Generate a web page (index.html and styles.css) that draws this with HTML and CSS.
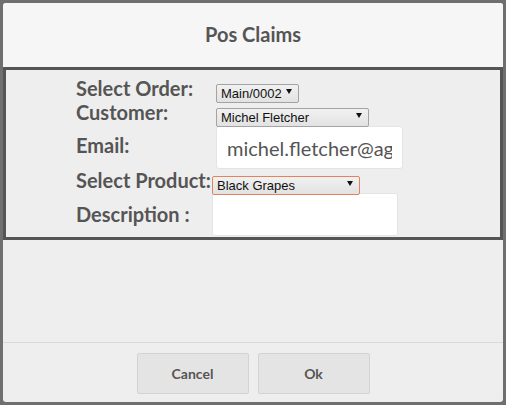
FILE: index.html
```html
<!DOCTYPE html>
<html lang="en">
<head>
    <meta charset="UTF-8">
    <meta name="viewport" content="width=device-width, initial-scale=1.0">
    <title>Pos Claims</title>
    <link rel="stylesheet" href="styles.css">
</head>
<body>
    <div class="modal">
        <div class="modal-header">Pos Claims</div>

        <div class="claim-box">
            <div class="row">
                <label class="lbl">Select Order:</label>
                <span class="select select-order">
                    <select>
                        <option>Main/0002</option>
                    </select>
                </span>
            </div>
            <div class="row">
                <label class="lbl">Customer:</label>
                <span class="select select-customer">
                    <select>
                        <option>Michel Fletcher</option>
                    </select>
                </span>
            </div>
            <div class="row row-email">
                <label class="lbl">Email:</label>
                <input class="text-input" type="text" value="michel.fletcher@agrolait.example.com">
            </div>
            <div class="row row-shift">
                <label class="lbl">Select Product:</label>
                <span class="select select-product focused">
                    <select>
                        <option>Black Grapes</option>
                    </select>
                </span>
            </div>
            <div class="row row-shift row-desc">
                <label class="lbl">Description :</label>
                <input class="text-input desc-input" type="text">
            </div>
        </div>

        <div class="spacer"></div>

        <div class="modal-footer">
            <button class="btn">Cancel</button>
            <button class="btn">Ok</button>
        </div>
    </div>
</body>
</html>
```

FILE: styles.css
```css
body {
    margin: 0;
    background-color: #6f6f6f;
    font-family: 'Lato', sans-serif;
    color: #555;
}
.modal {
    margin: 3px;
    width: 500px;
    height: 399px;
    background: #efeeee;
    border-radius: 3px;
    display: flex;
    flex-direction: column;
    overflow: hidden;
}
.modal-header {
    height: 64px;
    background: #f6f6f6;
    font-size: 20px;
    font-weight: bold;
    text-align: center;
    line-height: 62px;
}
.claim-box {
    height: 161px;
    border: 3px solid #555;
    padding: 6px 0 0 70px;
    overflow: hidden;
}
.row {
    display: flex;
    align-items: flex-start;
    height: 24px;
}
.lbl {
    width: 140px;
    flex-shrink: 0;
    font-size: 20px;
    font-weight: bold;
    line-height: 24px;
}
.row-shift .lbl {
    width: 136px;
}
.select {
    position: relative;
    margin-top: 6px;
    display: inline-block;
}
.select select {
    appearance: none;
    -webkit-appearance: none;
    height: 19px;
    width: 100%;
    margin: 0;
    padding: 0 0 0 4px;
    font-family: 'Liberation Sans', Arial, sans-serif;
    font-size: 13px;
    color: #111;
    background: linear-gradient(#f1f1f1, #e2e2e2);
    border: 1px solid #a3a3a3;
    border-radius: 2px;
    outline: none;
}
.select::after {
    content: "";
    position: absolute;
    right: 7px;
    top: 7px;
    border-left: 3px solid transparent;
    border-right: 3px solid transparent;
    border-top: 5px solid #111;
    pointer-events: none;
}
.select-order { width: 83px; }
.select-customer { width: 153px; }
.select-product { width: 148px; }
.focused select {
    border-color: #e2825f;
}
.row-email {
    height: 44px;
}
.row-email .lbl {
    margin-top: 9px;
}
.text-input {
    box-sizing: border-box;
    height: 43px;
    margin: 2px 0 0 0;
    padding: 0 10px;
    background: #fff;
    border: 1px solid #e4e4e4;
    border-radius: 3px;
    font-family: 'Lato', sans-serif;
    font-size: 20px;
    color: #555;
    outline: none;
    width: 187px;
}
.row-desc .lbl {
    margin-top: 10px;
}
.desc-input {
    width: 186px;
    margin-top: 1px;
}
.spacer {
    height: 102px;
    border-bottom: 1px solid #d9d9d9;
}
.modal-footer {
    display: flex;
    justify-content: center;
    gap: 9px;
    padding-top: 10px;
}
.btn {
    width: 112px;
    height: 41px;
    background: #e5e4e4;
    border: 1px solid #d3d3d3;
    border-radius: 2px;
    font-family: 'Lato', sans-serif;
    font-size: 14px;
    font-weight: bold;
    color: #555;
    cursor: pointer;
}
```
